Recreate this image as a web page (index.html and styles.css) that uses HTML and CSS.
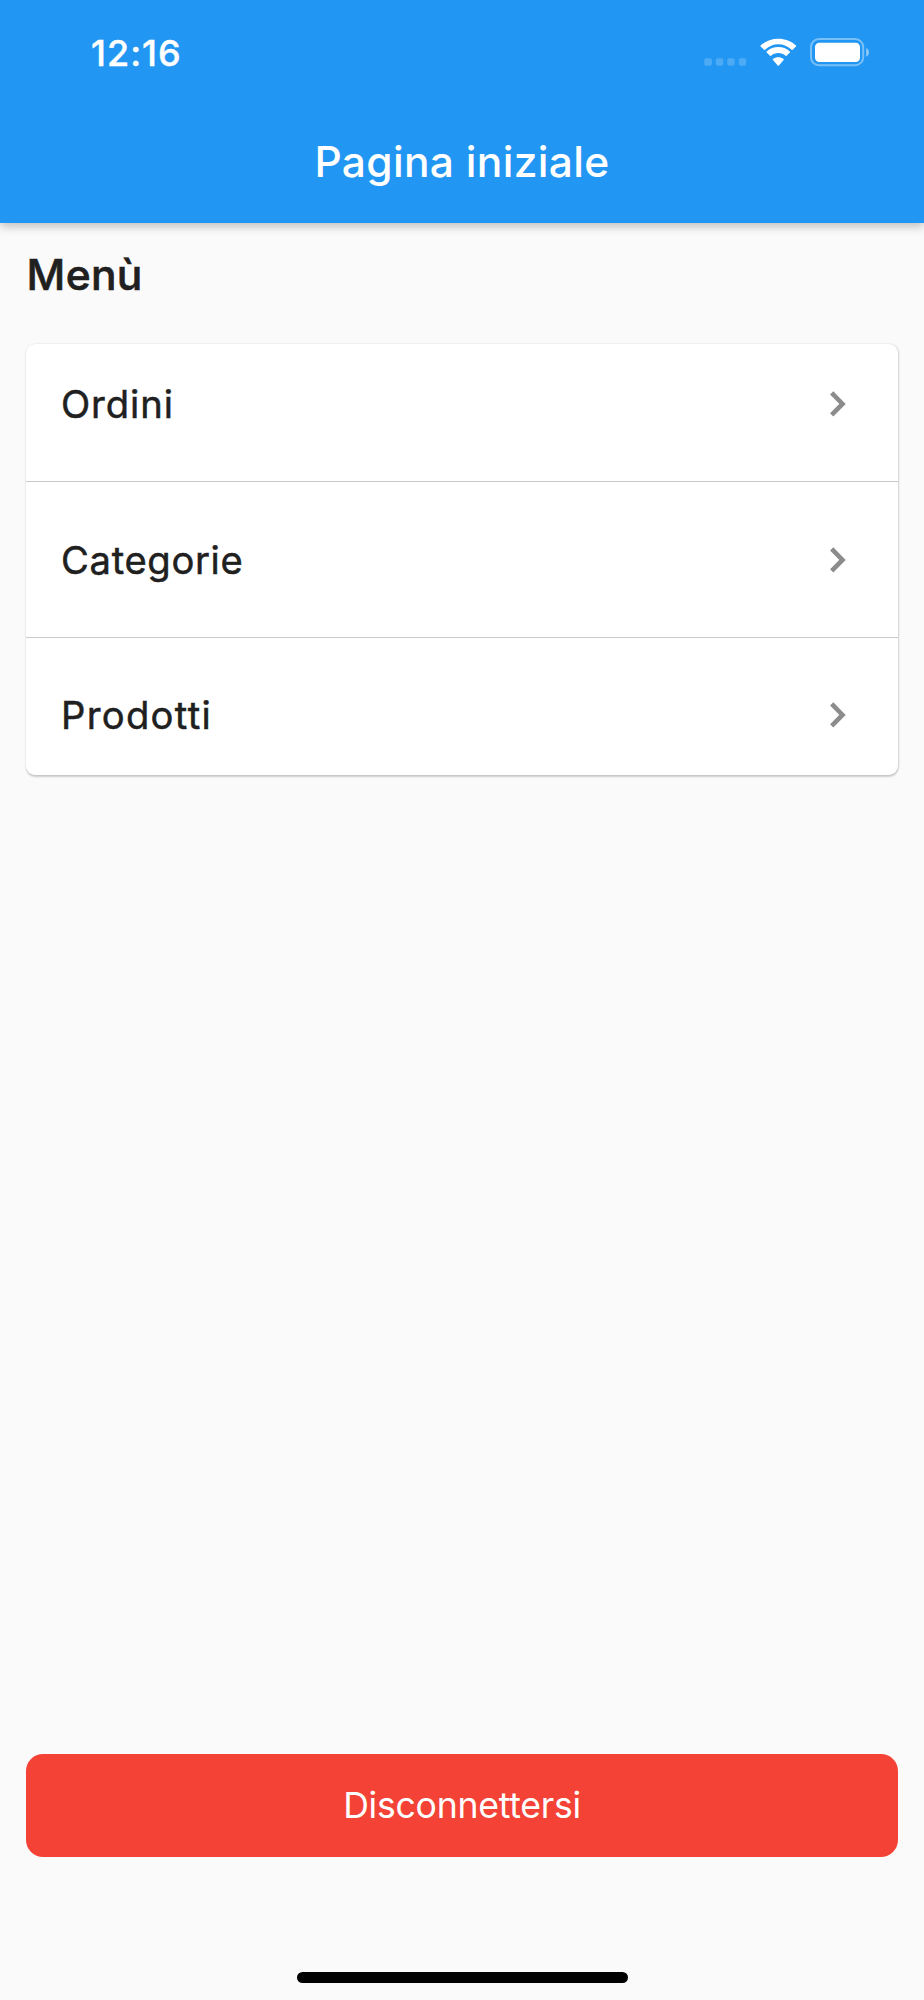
FILE: index.html
```html
<!DOCTYPE html>
<html lang="it">
<head>
<meta charset="utf-8">
<title>Pagina iniziale</title>
<link rel="stylesheet" href="styles.css">
</head>
<body>
<div class="screen">
  <header class="app-bar">
    <div class="status-bar">
      <span class="time">12:16</span>
      <svg class="status-icons" width="170" height="32" viewBox="700 36 170 32" aria-hidden="true">
        <g fill="#fff" fill-opacity=".2">
          <rect x="704.3" y="58.2" width="7.6" height="7.6" rx="2"/>
          <rect x="715.9" y="58.2" width="7.4" height="7.6" rx="2"/>
          <rect x="727.3" y="58.2" width="7.4" height="7.6" rx="2"/>
          <rect x="738.8" y="58.2" width="7.4" height="7.6" rx="2"/>
        </g>
        <g fill="#fff">
          <path d="M778.3 44.2c5.1 0 9.8 2 13.3 5.5.3.3.7.3 1 0l3.4-3.2c.3-.3.3-.8 0-1.1C791.3 41.1 785 38.7 778.3 38.7S765.3 41.1 760.6 45.4c-.3.3-.3.8 0 1.1l3.4 3.2c.3.3.7.3 1 0 3.5-3.5 8.2-5.5 13.3-5.5z"/>
          <path d="M778.3 53c2.7 0 5.3 1 7.3 2.8.3.3.7.3 1 0l3.3-3.3c.3-.3.3-.8 0-1.1-3.2-3-7.3-4.4-11.6-4.4s-8.4 1.4-11.6 4.4c-.3.3-.3.8 0 1.1l3.3 3.3c.3.3.7.3 1 0 2-1.8 4.6-2.8 7.3-2.8z"/>
          <path d="M783.6 60.1c.3-.3.3-.8 0-1.1-3-2.3-7.6-2.3-10.6 0-.3.3-.3.8 0 1.1l4.7 5.5c.3.3.9.3 1.2 0z"/>
        </g>
        <rect x="811" y="39" width="52.2" height="26.2" rx="8" fill="none" stroke="#fff" stroke-opacity=".4" stroke-width="2"/>
        <rect x="815" y="42.7" width="45" height="19.3" rx="4.3" fill="#fff"/>
        <path d="M866.2 48v8.8c3.6-1.5 3.6-7.3 0-8.8z" fill="#fff" fill-opacity=".5"/>
      </svg>
    </div>
    <h1 class="app-title">Pagina iniziale</h1>
  </header>

  <main class="content">
    <h2 class="heading">Menù</h2>
    <nav class="menu">
      <a class="item item-first">
        <span class="label label-orders">Ordini</span>
        <svg class="chevron" width="18" height="28" viewBox="0 0 18 28"><path d="M2.7 2.9 13.5 13.9 2.7 24.9"/></svg>
      </a>
      <a class="item">
        <span class="label label-categories">Categorie</span>
        <svg class="chevron" width="18" height="28" viewBox="0 0 18 28"><path d="M2.7 2.9 13.5 13.9 2.7 24.9"/></svg>
      </a>
      <a class="item item-last">
        <span class="label label-products">Prodotti</span>
        <svg class="chevron" width="18" height="28" viewBox="0 0 18 28"><path d="M2.7 2.9 13.5 13.9 2.7 24.9"/></svg>
      </a>
    </nav>
  </main>

  <footer class="footer">
    <button class="logout" type="button">Disconnettersi</button>
    <div class="home-indicator"></div>
  </footer>
</div>
</body>
</html>
```

FILE: styles.css
```css
* {
  box-sizing: border-box;
}

body {
  margin: 0;
  background: #fafafa;
  color: #202020;
  font-family: Inter, "Liberation Sans", sans-serif;
}

.screen {
  display: flex;
  flex-direction: column;
  height: 2000px;
  overflow: hidden;
}

.app-bar {
  flex: none;
  height: 222.5px;
  background: #2196f3;
  color: #fff;
  box-shadow: 0 4px 9px rgba(0, 0, 0, .18), 0 1px 10px rgba(0, 0, 0, .08);
}

.status-bar {
  display: flex;
  align-items: center;
  justify-content: space-between;
  height: 106px;
  padding: 0 54px 0 91px;
}

.time {
  font-size: 36px;
  font-weight: 500;
  line-height: 44px;
  letter-spacing: 1px;
  -webkit-text-stroke: .4px currentColor;
}

.status-icons {
  display: block;
  margin-top: -2px;
}

.app-title {
  margin: 0;
  font-size: 42.5px;
  font-weight: 500;
  line-height: 112px;
  letter-spacing: .3px;
  text-align: center;
}

.content {
  flex: 1;
  padding: 22px 26px 0;
}

.heading {
  margin: 0 0 39px;
  padding-left: .6px;
  font-size: 42.5px;
  font-weight: 500;
  line-height: 60px;
  letter-spacing: .3px;
  -webkit-text-stroke: .6px currentColor;
}

.menu {
  border-radius: 9px;
  background: #fff;
  box-shadow: 0 1.5px 2px rgba(0, 0, 0, .18), 1px 0 2px rgba(0, 0, 0, .12);
}

.item {
  display: flex;
  align-items: center;
  justify-content: space-between;
  height: 155.5px;
  padding: 1px 51px 0 35px;
}

.item + .item {
  border-top: 1.5px solid #c9c9c9;
}

.item-first {
  height: 137.5px;
  padding-top: 0;
  padding-bottom: 17px;
}

.item-last {
  height: 138.5px;
  padding-top: 17px;
}

.label {
  font-size: 38.2px;
  font-weight: 400;
  line-height: 48px;
  -webkit-text-stroke: .5px currentColor;
}

.label-orders {
  letter-spacing: .9px;
}

.label-categories {
  letter-spacing: .65px;
}

.label-products {
  letter-spacing: 1.3px;
}

.chevron {
  fill: none;
  stroke: #8c8c8c;
  stroke-width: 4.6;
}

.footer {
  display: flex;
  flex: none;
  flex-direction: column;
  align-items: center;
  padding: 0 26px 17.5px;
}

.logout {
  width: 100%;
  height: 103.5px;
  margin-bottom: 114.5px;
  padding: 2px 0 0;
  border: 0;
  border-radius: 17px;
  background: #f44336;
  color: #fff;
  font: 400 35.6px/44px Inter, "Liberation Sans", sans-serif;
  letter-spacing: -.25px;
}

.home-indicator {
  width: 331px;
  height: 11px;
  border-radius: 6px;
  background: #000;
}
```
